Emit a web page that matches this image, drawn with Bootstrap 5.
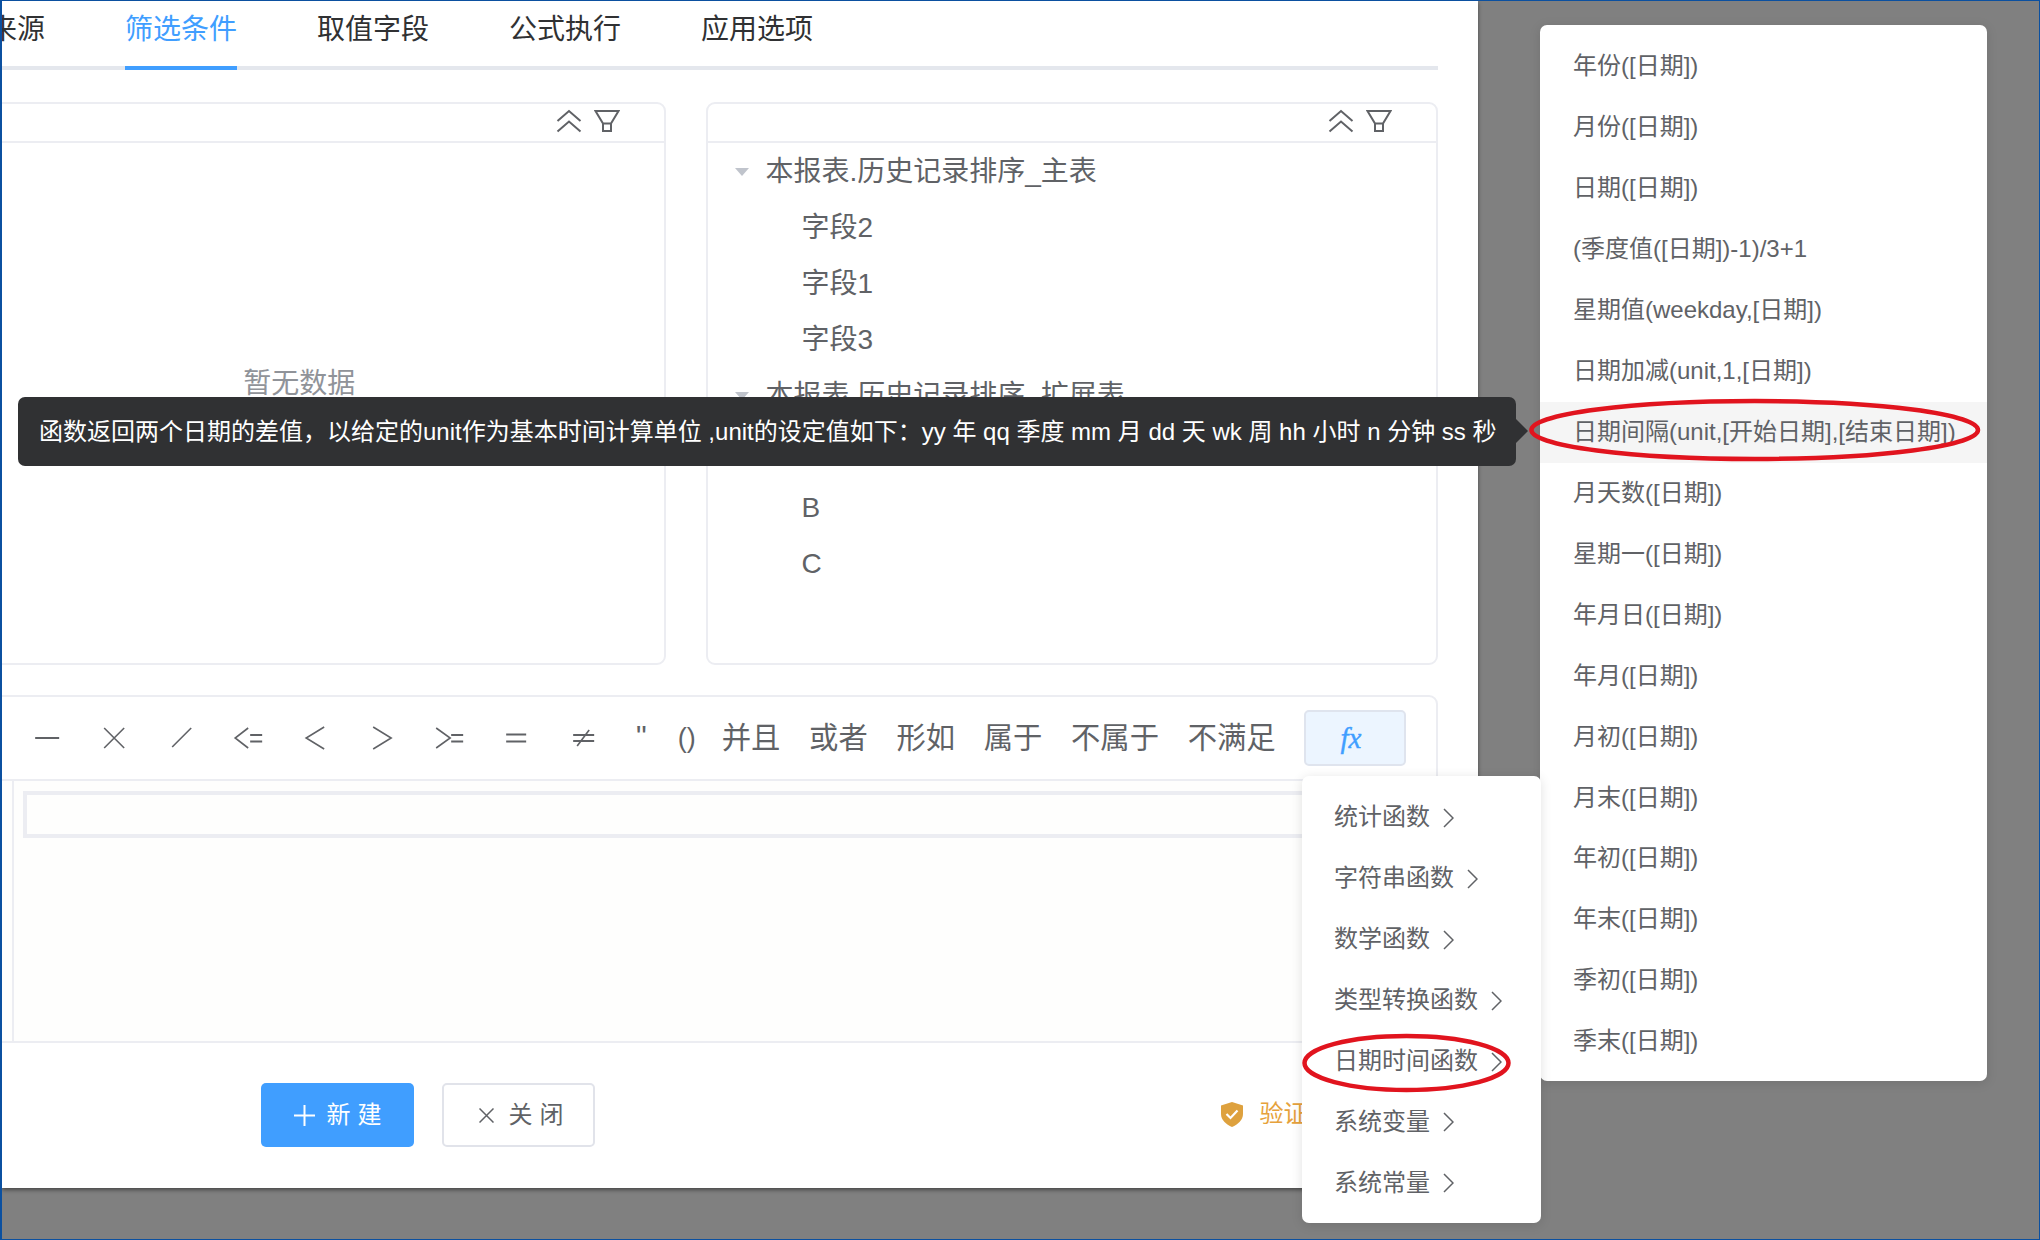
<!DOCTYPE html>
<html lang="zh-CN"><head><meta charset="utf-8"><title>筛选条件</title>
<link rel="stylesheet" href="https://cdn.jsdelivr.net/npm/bootstrap@5.3.0/dist/css/bootstrap.min.css">
<style>
html,body{margin:0;height:100%;background:#808080}
body{font-family:"Liberation Sans","Noto Sans CJK SC",sans-serif;color:#606266;overflow:hidden}
.stage{width:2040px;height:1240px;background:#808080;border-top:1px solid #0b50a0;border-left:2px solid #0b50a0;border-bottom:1px solid #0b50a0;border-right:1px solid #0b50a0;box-sizing:border-box}
.dlg{width:1476px;height:1187px;box-shadow:0 2px 4px rgba(0,0,0,.45)}
.tabbar{margin-left:-69px;width:1505px;height:69px;border-bottom:4px solid #e4e7ed;flex-wrap:nowrap;gap:80px;font-size:28px}
.tab-item{height:69px;line-height:58.6px;color:#303133;border-bottom:4px solid transparent;white-space:nowrap}
.tab-item.on{color:#409eff;border-bottom-color:#409eff}
.pane-row{margin-top:32px;margin-left:-22px}
.pane{height:563px;border:2.5px solid #ecedf2;border-radius:9px;font-size:28px}
.pane-l{width:685.500px}
.pane-r{width:732.100px;margin-left:40px}
.pane-head{height:39px;border-bottom:2.5px solid #ecedf2;padding-right:43.600px;padding-bottom:2.600px;gap:12px;margin-bottom:.7px}
.empty-tip{color:#909399;padding-top:219.300px;padding-right:47px;text-align:center}
.tree-row{height:56px;padding-left:59px;white-space:nowrap}
.tree-row.leaf{padding-left:94px}
.tree-tri{width:0;height:0;border-left:7.5px solid transparent;border-right:7.5px solid transparent;border-top:8px solid #c0c4cc;margin-right:17px;margin-left:-32px}
.ic{stroke:#606266;fill:none;stroke-width:2}
.toolbar{margin-top:30px;margin-left:-22px;width:1458px;height:86px;border:2.5px solid #ecedf2;border-radius:9px 9px 0 0;padding-left:46px;gap:28.67px;font-size:29.33px;white-space:nowrap}
.op{width:38.33px;height:32px;flex:none}
.op-q{width:21px;flex:none;text-align:center;font-size:30px;line-height:1;margin-top:-4px}
.op-p{width:12.600px;flex:none;font-size:27px;display:flex;justify-content:center}
.fx-btn{position:relative;width:102px;height:56px;margin-left:-.3px;background:#ecf5ff;border:2.5px solid #dfe4ee;border-radius:5px;color:#409eff;font:italic 29px "Liberation Serif",serif;-webkit-text-stroke:.4px #409eff;padding:0 8px 0 0;display:flex;align-items:center;justify-content:center}
.edit-wrap{width:1436px;height:262px;border-bottom:2.5px solid #ecedf2;background:#fefefd}
.edit-in{margin-left:10px;height:100%;border-left:2.5px solid #ecedf2;padding:10px 0 0 9px}
.edit-box{height:47px;border:4px solid #ecedf2;border-right:0}
.foot{padding:40px 0 0 259px;height:100px;gap:28px}
.act{width:153px;height:64px;padding:0;font-size:24px;border-radius:5px;gap:12px;display:flex;align-items:center;justify-content:center;line-height:1}
.act-new{background:#409eff;border:0;color:#fff}
.act-close{background:#fff;border:2.5px solid #e1e3ea;color:#606266;gap:15px;padding-left:5px}
.act span{letter-spacing:7px;margin-right:-7px}
.verify{margin-left:598px;color:#e6a23c;font-size:24px;gap:16.500px;height:62px}
.tip{position:absolute;left:16px;top:396px;width:1498px;height:69px;background:#303133;color:#fff;font-size:24px;border-radius:7px;padding-left:21px;display:flex;align-items:center;white-space:nowrap}
.tip::after{content:"";position:absolute;right:-12px;top:22px;border-top:12px solid transparent;border-bottom:12px solid transparent;border-left:12px solid #303133}
.fn-menu{display:block;position:absolute;margin:0;padding:11.300px 0 8.700px;border:0;background:#fff;box-shadow:0 2px 12px rgba(0,0,0,.12);border-radius:7px;font-size:24px;min-width:0;--bs-dropdown-font-size:24px}
.fn-cat{left:1300px;top:775px;width:239px;z-index:3}
.fn-list{left:1538px;top:24px;width:447px;z-index:2}
.fn-menu .dropdown-item{height:60.950px;line-height:60.950px;padding:0 0 0 33px;color:#606266;display:flex;align-items:center;white-space:nowrap;background:transparent}
.fn-cat .dropdown-item{padding-left:32px}
.fn-list .dropdown-item.hot{background:#f5f5f5}
.fn-chev{margin-left:13px;flex:none}
.ring{position:absolute;z-index:5;fill:none;stroke:#e1141e;stroke-width:4.5}
.ring-a{left:1523px;top:394px}
.ring-b{left:1296px;top:1029px}
</style></head>
<body>
<div class="stage position-relative overflow-hidden">
  <div class="dlg bg-white overflow-hidden">
    <div class="nav tabbar">
      <a class="tab-item text-decoration-none" href="#">数据来源</a>
      <a class="tab-item on text-decoration-none" href="#">筛选条件</a>
      <a class="tab-item text-decoration-none" href="#">取值字段</a>
      <a class="tab-item text-decoration-none" href="#">公式执行</a>
      <a class="tab-item text-decoration-none" href="#">应用选项</a>
    </div>
    <div class="d-flex pane-row">
      <div class="pane pane-l">
        <div class="pane-head d-flex justify-content-end align-items-center">
          <svg class="ic" width="26" height="24" viewBox="0 0 26 24"><path d="M1.500 12 13 2 24.500 12M1.500 22.500 13 12.500 24.500 22.500"/></svg>
          <svg class="ic" width="26" height="24" viewBox="0 0 26 24"><path d="M1.500 2H24.500L17 14.500H9ZM9 14.500V22H17V14.500"/></svg>
        </div>
        <div class="empty-tip">暂无数据</div>
      </div>
      <div class="pane pane-r">
        <div class="pane-head d-flex justify-content-end align-items-center">
          <svg class="ic" width="26" height="24" viewBox="0 0 26 24"><path d="M1.500 12 13 2 24.500 12M1.500 22.500 13 12.500 24.500 22.500"/></svg>
          <svg class="ic" width="26" height="24" viewBox="0 0 26 24"><path d="M1.500 2H24.500L17 14.500H9ZM9 14.500V22H17V14.500"/></svg>
        </div>
        <div class="tree-row d-flex align-items-center"><i class="tree-tri"></i>本报表.历史记录排序_主表</div>
        <div class="tree-row leaf d-flex align-items-center">字段2</div>
        <div class="tree-row leaf d-flex align-items-center">字段1</div>
        <div class="tree-row leaf d-flex align-items-center">字段3</div>
        <div class="tree-row d-flex align-items-center"><i class="tree-tri"></i>本报表.历史记录排序_扩展表</div>
        <div class="tree-row leaf d-flex align-items-center">A</div>
        <div class="tree-row leaf d-flex align-items-center">B</div>
        <div class="tree-row leaf d-flex align-items-center">C</div>
      </div>
    </div>
    <div class="toolbar d-flex align-items-center">
      <svg class="op ic" viewBox="0 0 38 32"><path d="M7 16H31"/></svg>
      <svg class="op ic" viewBox="0 0 38 32"><path d="M9 6 29 26M29 6 9 26" stroke-width="1.600"/></svg>
      <svg class="op ic" viewBox="0 0 38 32"><path d="M10 25 29 6" stroke-width="1.600"/></svg>
      <svg class="op ic" viewBox="0 0 38 32"><path d="M19 6 6 16 19 26" stroke-width="1.600"/><path d="M21 13H33M21 19.500H33"/></svg>
      <svg class="op ic" viewBox="0 0 38 32"><path d="M28 5 10 16 28 27" stroke-width="1.600"/></svg>
      <svg class="op ic" viewBox="0 0 38 32"><path d="M10 5 28 16 10 27" stroke-width="1.600"/></svg>
      <svg class="op ic" viewBox="0 0 38 32"><path d="M6 6 20 16 6 26" stroke-width="1.600"/><path d="M21 13H33M21 19.500H33"/></svg>
      <svg class="op ic" viewBox="0 0 38 32"><path d="M9 12.500H29M9 19.500H29"/></svg>
      <svg class="op ic" viewBox="0 0 38 32"><path d="M9 13H30M9 19H30"/><path d="M25 8 13 24" stroke-width="1.600"/></svg>
      <span class="op-q">"</span>
      <span class="op-p">()</span>
      <span>并且</span><span>或者</span><span>形如</span><span>属于</span><span>不属于</span><span>不满足</span>
      <button type="button" class="fx-btn">fx</button>
    </div>
    <div class="edit-wrap"><div class="edit-in"><div class="edit-box"></div></div></div>
    <div class="foot d-flex align-items-start">
      <button type="button" class="btn act act-new"><svg width="21" height="21" viewBox="0 0 21 21" stroke="#fff" stroke-width="2"><path d="M10.500 0V21M0 10.500H21"/></svg><span>新建</span></button>
      <button type="button" class="btn act act-close"><svg width="15" height="15" viewBox="0 0 15 15" stroke="#606266" stroke-width="1.500"><path d="M.5.500 14.500 14.500M14.500.500 .5 14.500"/></svg><span>关闭</span></button>
      <div class="verify d-flex align-items-center">
        <svg width="22" height="25" viewBox="0 0 22 25"><path fill="#dea13e" d="M11 0 22 3.500V12C22 18 17 22.500 11 25 5 22.500 0 18 0 12V3.500Z"/><path fill="none" stroke="#fff" stroke-width="2.200" d="M5.500 12 9.500 16 16.500 8.500"/></svg>
        <span>验证</span>
      </div>
    </div>
  </div>

  <div class="tip">函数返回两个日期的差值，以给定的unit作为基本时间计算单位 ,unit的设定值如下：yy 年 qq 季度 mm 月 dd 天 wk 周 hh 小时 n 分钟 ss 秒</div>

  <div class="dropdown-menu show fn-menu fn-cat">
    <a class="dropdown-item" href="#">统计函数<svg class="fn-chev ic" width="11" height="20" viewBox="0 0 11 20"><path d="M1 1 10 10 1 19" stroke-width="1.500"/></svg></a>
    <a class="dropdown-item" href="#">字符串函数<svg class="fn-chev ic" width="11" height="20" viewBox="0 0 11 20"><path d="M1 1 10 10 1 19" stroke-width="1.500"/></svg></a>
    <a class="dropdown-item" href="#">数学函数<svg class="fn-chev ic" width="11" height="20" viewBox="0 0 11 20"><path d="M1 1 10 10 1 19" stroke-width="1.500"/></svg></a>
    <a class="dropdown-item" href="#">类型转换函数<svg class="fn-chev ic" width="11" height="20" viewBox="0 0 11 20"><path d="M1 1 10 10 1 19" stroke-width="1.500"/></svg></a>
    <a class="dropdown-item" href="#">日期时间函数<svg class="fn-chev ic" width="11" height="20" viewBox="0 0 11 20"><path d="M1 1 10 10 1 19" stroke-width="1.500"/></svg></a>
    <a class="dropdown-item" href="#">系统变量<svg class="fn-chev ic" width="11" height="20" viewBox="0 0 11 20"><path d="M1 1 10 10 1 19" stroke-width="1.500"/></svg></a>
    <a class="dropdown-item" href="#">系统常量<svg class="fn-chev ic" width="11" height="20" viewBox="0 0 11 20"><path d="M1 1 10 10 1 19" stroke-width="1.500"/></svg></a>
  </div>

  <div class="dropdown-menu show fn-menu fn-list">
    <a class="dropdown-item" href="#">年份([日期])</a>
    <a class="dropdown-item" href="#">月份([日期])</a>
    <a class="dropdown-item" href="#">日期([日期])</a>
    <a class="dropdown-item" href="#">(季度值([日期])-1)/3+1</a>
    <a class="dropdown-item" href="#">星期值(weekday,[日期])</a>
    <a class="dropdown-item" href="#">日期加减(unit,1,[日期])</a>
    <a class="dropdown-item hot" href="#">日期间隔(unit,[开始日期],[结束日期])</a>
    <a class="dropdown-item" href="#">月天数([日期])</a>
    <a class="dropdown-item" href="#">星期一([日期])</a>
    <a class="dropdown-item" href="#">年月日([日期])</a>
    <a class="dropdown-item" href="#">年月([日期])</a>
    <a class="dropdown-item" href="#">月初([日期])</a>
    <a class="dropdown-item" href="#">月末([日期])</a>
    <a class="dropdown-item" href="#">年初([日期])</a>
    <a class="dropdown-item" href="#">年末([日期])</a>
    <a class="dropdown-item" href="#">季初([日期])</a>
    <a class="dropdown-item" href="#">季末([日期])</a>
  </div>

  <svg class="ring ring-a" width="460" height="70" viewBox="0 0 460 70"><ellipse cx="229.700" cy="35" rx="223.300" ry="29"/></svg>
  <svg class="ring ring-b" width="217" height="66" viewBox="0 0 217 66"><ellipse cx="108.500" cy="33" rx="102" ry="27"/></svg>
</div>
<script src="https://cdn.jsdelivr.net/npm/bootstrap@5.3.0/dist/js/bootstrap.bundle.min.js"></script>
</body></html>
